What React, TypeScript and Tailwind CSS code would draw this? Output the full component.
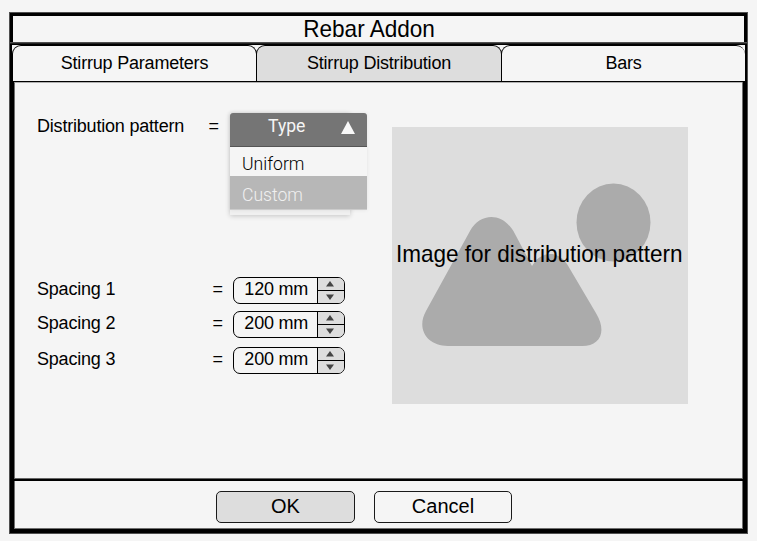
const SANS = "font-['Liberation_Sans',Arial,sans-serif]";
const LABEL = "text-[18px] tracking-[-0.2px] leading-5 whitespace-nowrap";

function Tab({ label, className }: { label: string; className: string }) {
  return (
    <button
      className={`h-[36px] shrink-0 rounded-t-[9px] border border-b-0 border-black pb-[2px] text-center ${LABEL} ${className}`}
    >
      {label}
    </button>
  );
}

function Spinner({ label, value, className }: { label: string; value: string; className: string }) {
  return (
    <div className={`flex h-[27px] ${className}`}>
      <span className={`w-[175px] pt-[2px] ${LABEL}`}>{label}</span>
      <span className={`w-[21px] pt-[2px] pl-[0.5px] ${LABEL}`}>=</span>
      <div className="flex h-[26.500px] w-[112px] overflow-hidden rounded-[7px] border-[1.5px] border-black bg-[#f5f5f5]">
        <span className={`w-[82.500px] pt-[1px] pl-[2px] text-center ${LABEL}`}>{value}</span>
        <div className="flex flex-1 flex-col border-l-[1.5px] border-black bg-[#dddddd]">
          <div className="flex h-[13px] items-center justify-center border-b border-black pr-px">
            <svg width="8" height="6" viewBox="0 0 8 6"><path d="M0 5.5 4 0l4 5.5z" fill="#444" /></svg>
          </div>
          <div className="flex h-[11px] items-center justify-center pr-px">
            <svg width="8" height="6" viewBox="0 0 8 6"><path d="M0 .5 4 6 8 .5z" fill="#444" /></svg>
          </div>
        </div>
      </div>
    </div>
  );
}

export default function App() {
  return (
    <main className={`h-[541px] w-[757px] bg-[#f5f5f5] pt-3 pl-[9px] text-black ${SANS}`}>
      <section className="flex h-[522px] w-[739px] flex-col border border-[#505050]">
        <h1 className="h-[29px] border-x-[3px] border-t-[3px] border-black pr-[19px] text-center text-[24px] leading-[26px]">
          <span className="inline-block origin-center scale-x-[0.94]">Rebar Addon</span>
        </h1>
        <div className="h-[2px] border-t border-[#505050] bg-[#222]" />
        <div className="flex h-[37px] border-x-2 border-t border-black bg-[#f5f5f5]">
          <Tab label="Stirrup Parameters" className="w-[245px] bg-[#f5f5f5]" />
          <Tab label="Stirrup Distribution" className="-ml-px w-[246px] bg-[#dddddd]" />
          <Tab label="Bars" className="-ml-px w-[244px] border-r-0 bg-[#f5f5f5]" />
        </div>
        <div className="flex h-[397px] border-x-4 border-t border-black">
          <div className="flex flex-1 border-t border-l border-t-[#b0b0b0] border-l-[#707070]">
            <div className="w-[377px] pt-[30px] pl-[22px]">
              <div className="flex h-[164px]">
                <span className={`w-[171px] pt-[3px] ${LABEL}`}>Distribution pattern</span>
                <span className={`w-[22px] pt-[3px] pl-[0.5px] ${LABEL}`}>=</span>
                <div className="relative w-[137px] font-[Roboto,sans-serif] text-[17.6px]">
                  <div className="absolute top-0 left-0 h-[102px] w-[120px] bg-[#f0f0f0] shadow-[0_1px_5px_rgba(0,0,0,0.2)]" />
                  <div className="relative h-[97px] shadow-[0_0_4px_rgba(0,0,0,0.08)]">
                    <div className="flex h-[34px] rounded-t-[3px] border-b border-[#555] bg-[#757575] pl-[38px] text-[#f5f5f5]">
                      <span className="w-[73px] leading-[26px]">Type</span>
                      <svg className="mt-[8px]" width="14" height="13" viewBox="0 0 14 13"><path d="M7 0l7 13H0z" fill="#f8f8f8" /></svg>
                    </div>
                    <div className="h-[29px] bg-[#f5f5f5] pl-[12px] leading-[35px] font-light">Uniform</div>
                    <div className="h-[34px] border-b border-[#ccc] bg-[#b7b7b7] pl-[12px] leading-[39px] font-light text-[#f0f0f0]">Custom</div>
                  </div>
                </div>
              </div>
              <Spinner label="Spacing 1" value="120 mm" className="" />
              <Spinner label="Spacing 2" value="200 mm" className="mt-[7px]" />
              <Spinner label="Spacing 3" value="200 mm" className="mt-[9px]" />
            </div>
            <div className="relative mt-[44px] h-[277px] w-[295.500px] bg-[#dddddd]">
              <svg className="absolute inset-0" width="295" height="277" viewBox="0 0 295 277" fill="#ababab">
                <ellipse cx="221.5" cy="95.5" rx="37" ry="39" />
                <path d="M78 104 C88 86 111 84 123 107 L140 139 L144 133 C154 124 167 125 175 137 L204.500 187 C215 205 208 219 190 219 L56 219 C35 219 24 202 34 184 Z" />
              </svg>
              <p className="absolute top-[113px] left-[4px] origin-left scale-x-[0.938] text-[24px] leading-7 whitespace-nowrap">
                Image for distribution pattern
              </p>
            </div>
          </div>
          <div className="w-px bg-[#707070]" />
        </div>
        <footer className="flex flex-1 flex-col border-x-4 border-b-4 border-black">
          <div className="h-[3px] border-t border-[#666] bg-black" />
          <div className="flex flex-1 gap-[19px] border border-t-0 border-[#707070] pl-[201px]">
            <button className="mt-[10px] h-[32px] w-[139px] rounded-[5px] border-[1.4px] border-[#1a1a1a] bg-[#dddddd] pb-[2px] text-[20px] leading-7">OK</button>
            <button className="mt-[10px] h-[32px] w-[138px] rounded-[5px] border-[1.4px] border-[#1a1a1a] bg-[#f5f5f5] pb-[2px] text-[20px] leading-7">Cancel</button>
          </div>
        </footer>
      </section>
    </main>
  );
}
